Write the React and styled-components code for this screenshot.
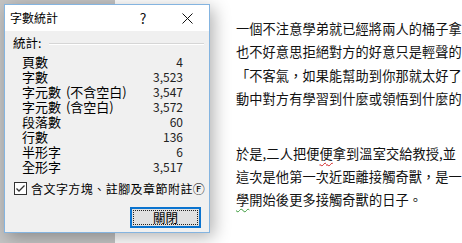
import styled, { createGlobalStyle } from "styled-components";

const GlobalStyle = createGlobalStyle`
  html, body { margin: 0; padding: 0; }
  body { width: 462px; height: 243px; overflow: hidden; background: #c4c4c4; }
`;

const stats = [
  { label: "頁數", value: "4" },
  { label: "字數", value: "3,523" },
  { label: "字元數 (不含空白)", value: "3,547" },
  { label: "字元數 (含空白)", value: "3,572" },
  { label: "段落數", value: "60" },
  { label: "行數", value: "136" },
  { label: "半形字", value: "6" },
  { label: "全形字", value: "3,517" },
];

const Screen = styled.div`
  position: relative;
  width: 462px;
  height: 243px;
  overflow: hidden;
  display: flex;
  background: #c4c4c4;
`;

const Page = styled.div`
  margin-left: 115px;
  flex: 1;
  background: #ffffff;
  padding: 17px 0 0 121px;
  overflow: hidden;
  font-family: "Noto Sans CJK TC", "Noto Sans", sans-serif;
  font-size: 13.2px;
  letter-spacing: 0.1px;
  color: #111;
`;

const Paragraph = styled.div`
  margin-top: ${(p) => p.$gap || 0}px;
`;

const Line = styled.div`
  height: 23.4px;
  line-height: 23.4px;
  white-space: nowrap;
`;

const Squiggle = styled.span`
  text-decoration: underline wavy ${(p) => p.$color};
  text-decoration-thickness: 1px;
  text-underline-offset: 3px;
`;

const Dialog = styled.div`
  position: absolute;
  left: 4px;
  top: 4px;
  width: 206px;
  height: 229px;
  box-sizing: border-box;
  border: 1px solid #84b4e0;
  background: #f0f0f0;
  box-shadow: 4px 4px 16px rgba(0, 0, 0, 0.3);
  display: flex;
  flex-direction: column;
  font-family: "Noto Sans CJK TC", "Noto Sans", sans-serif;
  font-size: 12px;
  color: #000;
`;

const TitleBar = styled.div`
  height: 26px;
  background: #ffffff;
  display: flex;
  align-items: center;
  padding-left: 5px;
`;

const Title = styled.div`
  flex: 1;
  font-size: 12px;
  line-height: 26px;
`;

const CaptionButton = styled.div`
  width: 44px;
  height: 26px;
  display: flex;
  align-items: center;
  justify-content: center;
  font-size: 14px;
  color: #111;
`;

const Body = styled.div`
  flex: 1;
  display: flex;
  flex-direction: column;
  padding-top: 4px;
`;

const GroupHeader = styled.div`
  display: flex;
  align-items: center;
  height: 15px;
  line-height: 15px;
  padding-left: 8px;
  padding-right: 5px;
  font-size: 12.5px;
`;

const Divider = styled.div`
  flex: 1;
  margin-left: 8px;
  margin-top: 2px;
  height: 1px;
  background: #d6d6d6;
  border-bottom: 1px solid #ffffff;
`;

const StatList = styled.div`
  margin-top: 4px;
  display: flex;
  flex-direction: column;
`;

const StatRow = styled.div`
  display: flex;
  justify-content: space-between;
  align-items: center;
  height: 15px;
  line-height: 15px;
  padding-left: 17px;
  padding-right: 26px;
`;

const StatLabel = styled.span`
  font-size: 13px;
  word-spacing: 2px;
`;

const StatValue = styled.span`
  font-size: 12px;
  color: #222;
`;

const CheckRow = styled.div`
  margin-top: 5px;
  display: flex;
  align-items: center;
  height: 18px;
  padding-left: 9px;
  gap: 4px;
  white-space: nowrap;
  font-size: 12px;
  letter-spacing: 0.45px;
`;

const CheckBox = styled.div`
  width: 13px;
  height: 13px;
  box-sizing: border-box;
  border: 1px solid #333;
  background: #fff;
  display: flex;
  align-items: center;
  justify-content: center;
`;

const Footer = styled.div`
  margin-top: 10px;
  display: flex;
  justify-content: flex-end;
  padding-right: 8px;
`;

const Button = styled.div`
  width: 71px;
  height: 21px;
  box-sizing: border-box;
  border: 2px solid #0a73cf;
  background: #e1e1e1;
  padding: 1px;
`;

const FocusRing = styled.div`
  height: 100%;
  box-sizing: border-box;
  border: 1px dotted #222;
  display: flex;
  align-items: center;
  justify-content: center;
  font-size: 12.5px;
  line-height: 13px;
`;

export default function App() {
  return (
    <>
      <GlobalStyle />
      <Screen>
        <Page>
          <Paragraph>
            <Line>一個不注意學弟就已經將兩人的桶子拿起</Line>
            <Line>也不好意思拒絕對方的好意只是輕聲的向</Line>
            <Line>「不客氣，如果能幫助到你那就太好了」</Line>
            <Line>動中對方有學習到什麼或領悟到什麼的話</Line>
          </Paragraph>
          <Paragraph $gap={31}>
            <Line>
              於是,二人把便<Squiggle $color="#d02020">便</Squiggle>拿到溫室交給教授,並
            </Line>
            <Line>這次是他第一次近距離接觸奇獸，是一天</Line>
            <Line>
              <Squiggle $color="#3a9a3a">學</Squiggle>開始後更多接觸奇獸的日子。
            </Line>
          </Paragraph>
        </Page>

        <Dialog>
          <TitleBar>
            <Title>字數統計</Title>
            <CaptionButton>?</CaptionButton>
            <CaptionButton>
              <svg width="11" height="11" viewBox="0 0 11 11">
                <path d="M0.5 0.5 L10.5 10.5 M10.5 0.5 L0.5 10.5" stroke="#111" strokeWidth="1" />
              </svg>
            </CaptionButton>
          </TitleBar>
          <Body>
            <GroupHeader>
              統計:
              <Divider />
            </GroupHeader>
            <StatList>
              {stats.map((s) => (
                <StatRow key={s.label}>
                  <StatLabel>{s.label}</StatLabel>
                  <StatValue>{s.value}</StatValue>
                </StatRow>
              ))}
            </StatList>
            <CheckRow>
              <CheckBox>
                <svg width="11" height="11" viewBox="0 0 11 11">
                  <path d="M1.5 5.5 L4 8 L9.5 2.5" stroke="#333" strokeWidth="1.3" fill="none" />
                </svg>
              </CheckBox>
              含文字方塊、註腳及章節附註Ⓕ
            </CheckRow>
            <Footer>
              <Button>
                <FocusRing>關閉</FocusRing>
              </Button>
            </Footer>
          </Body>
        </Dialog>
      </Screen>
    </>
  );
}
